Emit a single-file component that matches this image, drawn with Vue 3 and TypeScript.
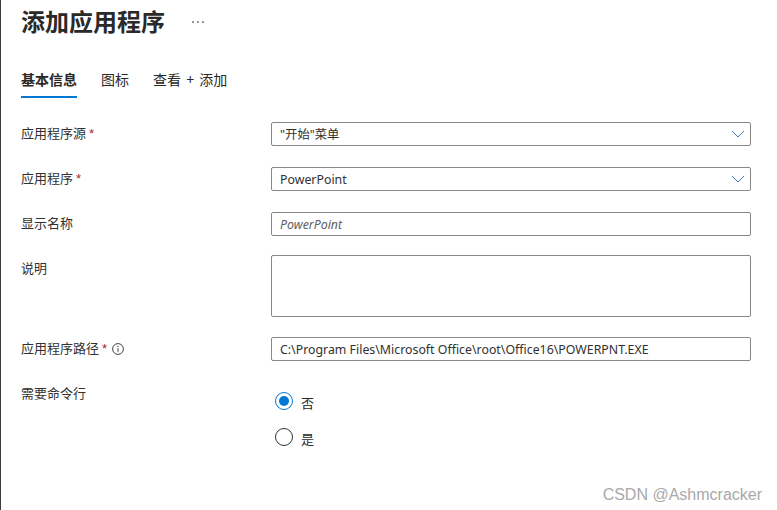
<script setup lang="ts">
interface Row { label: string; required?: boolean; info?: boolean; value: string; kind: 'select' | 'input' | 'placeholder' }
const topRows: Row[] = [
  { label: '应用程序源', required: true, value: '"开始"菜单', kind: 'select' },
  { label: '应用程序', required: true, value: 'PowerPoint', kind: 'select' },
  { label: '显示名称', value: 'PowerPoint', kind: 'placeholder' },
]
const tabs = ['基本信息', '图标', '查看 + 添加']
</script>

<template>
  <div class="page">
    <header class="head">
      <h1 class="title">添加应用程序</h1>
      <span class="more"><i></i><i></i><i></i></span>
    </header>
    <nav class="tabs">
      <span v-for="(t, i) in tabs" :key="t" class="tab" :class="{ active: i === 0 }">{{ t }}</span>
    </nav>
    <div class="form">
      <div v-for="r in topRows" :key="r.label" class="row">
        <label class="label">{{ r.label }}<span v-if="r.required" class="req">*</span></label>
        <div class="field" :class="{ ph: r.kind === 'placeholder' }">
          <span class="val">{{ r.value }}</span>
          <svg v-if="r.kind === 'select'" class="chev" width="14" height="8" viewBox="0 0 14 8">
            <path d="M1 1l6 6 6-6" fill="none" stroke="#3f80bf" stroke-width="1" />
          </svg>
        </div>
      </div>
      <div class="row area-row">
        <label class="label">说明</label>
        <div class="field area"></div>
      </div>
      <div class="row path-row">
        <label class="label">应用程序路径<span class="req">*</span>
          <svg class="info" width="12" height="12" viewBox="0 0 12 12">
            <circle cx="6" cy="6" r="5.4" fill="none" stroke="#444" stroke-width="1" />
            <path d="M6 5.2v3.6" stroke="#444" stroke-width="1" fill="none" />
            <circle cx="6" cy="3.5" r=".7" fill="#444" />
          </svg>
        </label>
        <div class="field"><span class="val">C:\Program Files\Microsoft Office\root\Office16\POWERPNT.EXE</span></div>
      </div>
      <div class="row cmd-row">
        <label class="label">需要命令行</label>
        <div class="radios">
          <div class="radio-item"><span class="radio on"></span><span class="rtext">否</span></div>
          <div class="radio-item"><span class="radio"></span><span class="rtext">是</span></div>
        </div>
      </div>
    </div>
    <div class="mark">CSDN @Ashmcracker</div>
  </div>
</template>

<style>
html, body { margin: 0; background: #fff; overflow: hidden; }
</style>

<style scoped>
.page {
  position: relative;
  box-sizing: border-box;
  width: 777px;
  height: 510px;
  padding: 0 26px 0 20px;
  border-left: 1px solid #3c3c3c;
  background: #fff;
  color: #292827;
  font-family: "Noto Sans", "Noto Sans CJK SC", sans-serif;
  font-size: 13px;
}
.head { display: flex; align-items: center; height: 43px; }
.title { margin: 0; font-size: 24px; line-height: 43px; font-weight: 700; color: #2b2a29; }
.more { display: flex; gap: 3px; margin-left: 27px; padding-top: 1px; }
.more i { width: 2px; height: 2px; background: #777; border-radius: 50%; }
.tabs { display: flex; gap: 24px; margin-top: 26px; height: 29px; }
.tab { font-size: 14px; line-height: 22px; height: 29px; box-sizing: border-box; white-space: nowrap; word-spacing: 1.5px; }
.tab.active { font-weight: 700; border-bottom: 2px solid #0078d4; }
.form { margin-top: 24px; }
.row { display: flex; height: 24px; margin-bottom: 21px; }
.label { width: 250px; flex: none; line-height: 22px; color: #323130; font-size: 13px; display: block; white-space: nowrap; }
.req { color: #a4262c; font-family: "Liberation Sans", sans-serif; margin-left: 3px; }
.field {
  box-sizing: border-box;
  flex: none;
  width: 480px;
  height: 24px;
  border: 1px solid #8a8886;
  border-radius: 2px;
  display: flex;
  align-items: center;
  justify-content: space-between;
  padding: 0 5px 0 8px;
  font-size: 12.35px;
  color: #323130;
}
.val { white-space: nowrap; }
.ph .val { font-style: italic; color: #605e5c; }
.chev { flex: none; }
.area-row { height: 62px; margin-top: -2px; margin-bottom: 20px; }
.area-row .label { padding-top: 2px; }
.field.area { height: 62px; }
.path-row { margin-bottom: 0; }
.info { vertical-align: -2px; margin-left: 5px; }
.cmd-row { height: auto; margin: 21px 0 0; }
.radios { display: flex; flex-direction: column; gap: 18px; padding: 10px 0 0 4px; }
.radio-item { display: flex; align-items: center; gap: 8px; height: 18px; line-height: 18px; }
.rtext { position: relative; top: 2px; }
.radio {
  box-sizing: border-box;
  width: 18px;
  height: 18px;
  border: 1px solid #323130;
  border-radius: 50%;
  position: relative;
}
.radio.on { border-color: #0078d4; }
.radio.on::after {
  content: "";
  position: absolute;
  left: 3px;
  top: 3px;
  width: 10px;
  height: 10px;
  border-radius: 50%;
  background: #0078d4;
}
.mark {
  position: absolute;
  right: 15px;
  bottom: 6px;
  font-family: "Liberation Sans", sans-serif;
  font-size: 16px;
  color: #a9a9a9;
}
</style>
